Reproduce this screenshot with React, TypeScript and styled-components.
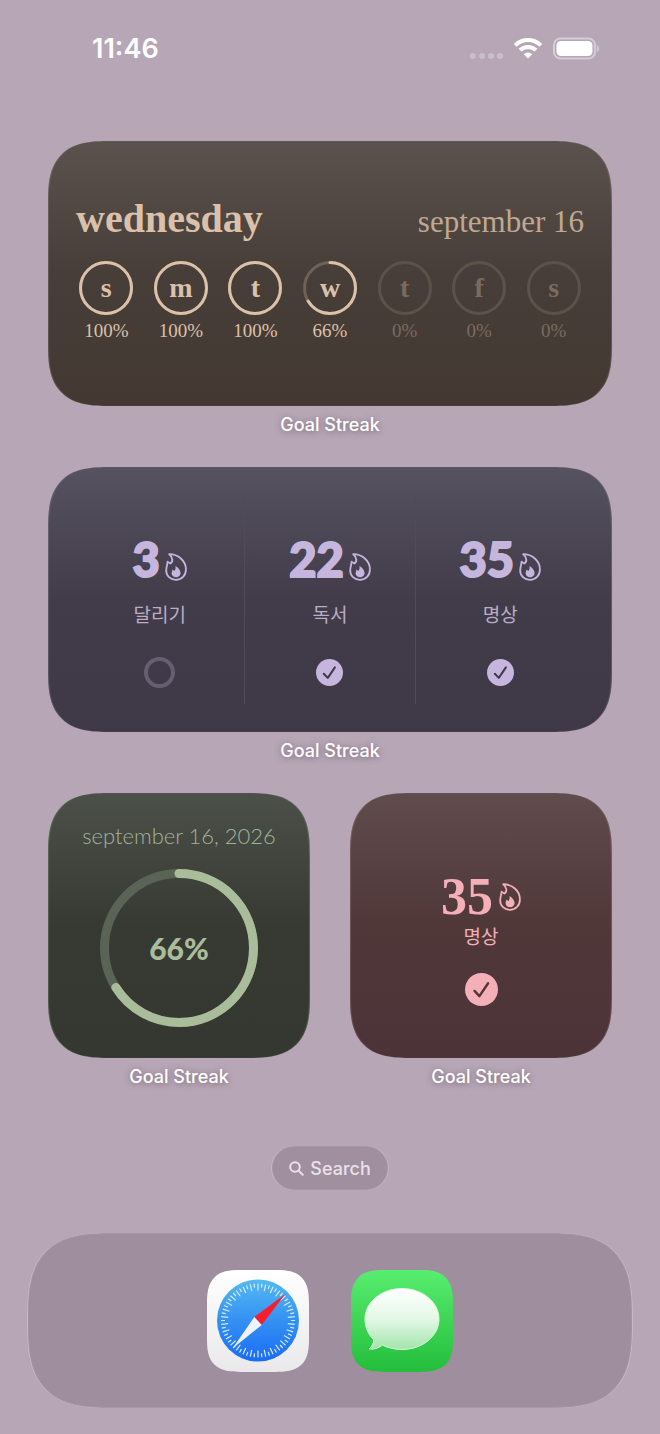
import React from "react";
import styled, { createGlobalStyle, css } from "styled-components";

const serif = '"Liberation Serif", "Times New Roman", serif';
const humanist = 'Lato, "Noto Sans CJK KR", sans-serif';
const system = 'Inter, "Liberation Sans", sans-serif';
const korean = '"Noto Sans CJK KR", sans-serif';

const GlobalStyle = createGlobalStyle`
  *, *::before, *::after { box-sizing: border-box; }
  body { margin: 0; background: #b7a7b6; font-family: ${system}; }
`;

const squircle = css<{ $round: number; $smooth: number }>`
  border-radius: ${(p) => p.$round}px;
  @supports (corner-shape: superellipse(1.5)) {
    border-radius: ${(p) => p.$smooth}px;
    corner-shape: superellipse(1.5);
  }
`;

const Screen = styled.div`
  display: flex;
  flex-direction: column;
  min-height: 100vh;
  padding-bottom: 26px;
`;

const StatusBar = styled.header`
  display: flex;
  align-items: center;
  justify-content: space-between;
  height: 98px;
  padding: 0 61px 0 92px;
  color: #fff;
`;

const Clock = styled.time`
  font-size: 27px;
  font-weight: 600;
  line-height: 32px;
`;

const StatusIcons = styled.div`
  display: flex;
  align-items: center;
  gap: 10px;
`;

const Widgets = styled.main`
  display: grid;
  grid-template-columns: 1fr 1fr;
  column-gap: 40px;
  row-gap: 24px;
  padding: 43px 48px 0;
`;

const Widget = styled.figure<{ $wide?: boolean }>`
  grid-column: ${(p) => (p.$wide ? "1 / -1" : "auto")};
  margin: 0;
`;

const Caption = styled.figcaption`
  height: 37px;
  color: #fff;
  font-size: 18px;
  font-weight: 500;
  line-height: 37px;
  text-align: center;
  text-shadow: 0 1px 6px rgba(60, 40, 60, 0.5);
`;

const Card = styled.section<{ $top: string; $mid: string; $bottom: string; $edge: string; $ink: string }>`
  display: flex;
  flex-direction: column;
  height: 265px;
  color: ${(p) => p.$ink};
  background: linear-gradient(${(p) => p.$top}, ${(p) => p.$mid} 50%, ${(p) => p.$bottom});
  box-shadow: inset 1px 0 1px ${(p) => p.$edge}, inset -1px 0 1px ${(p) => p.$edge};
  ${squircle}
`;

const WeekHeader = styled.div`
  display: flex;
  align-items: baseline;
  justify-content: space-between;
  padding: 54px 28px 0;
  font-family: ${serif};
  line-height: 48px;
`;

const Weekday = styled.h2`
  margin: 0;
  font-size: 40px;
  font-weight: 700;
`;

const MonthDay = styled.time`
  color: #c0a893;
  font-size: 31px;
`;

const Days = styled.ol`
  display: flex;
  margin: 0;
  padding: 15px 21px 0;
  list-style: none;
  font-family: ${serif};
`;

const Day = styled.li<{ $dim: boolean }>`
  display: flex;
  flex: 1;
  flex-direction: column;
  align-items: center;
  color: ${(p) => (p.$dim ? "#7a6b60" : "inherit")};
`;

const DayPercent = styled.span`
  font-size: 19px;
  line-height: 32px;
`;

const RingBox = styled.div`
  display: grid;
  place-items: center;
  > * { grid-area: 1 / 1; }
`;

const DayLetter = styled.span`
  font-size: 28px;
  font-weight: 700;
  line-height: 32px;
`;

const Goals = styled.ul`
  display: flex;
  flex: 1;
  margin: 0;
  padding: 28px 27px;
  list-style: none;
`;

const Goal = styled.li`
  display: flex;
  flex: 1;
  flex-direction: column;
  align-items: center;
  padding-top: 38px;
  & + & { border-left: 1px solid #504b5b; }
`;

const Streak = styled.div`
  display: flex;
  align-items: flex-end;
  gap: 5px;
`;

const StreakCount = styled.strong`
  font-family: ${humanist};
  font-size: 47px;
  font-weight: 900;
  line-height: 52px;
  -webkit-text-stroke: 2px currentColor;
`;

const FlameSlot = styled.span`
  display: flex;
  padding-bottom: 4px;
`;

const GoalName = styled.span`
  font-family: ${korean};
  font-size: 19px;
  font-weight: 400;
  line-height: 28px;
`;

const GoalLabel = styled(GoalName)`
  margin-top: 15px;
  color: #b9adc8;
`;

const Status = styled.div`
  display: flex;
  align-items: center;
  height: 32px;
  margin-top: 28px;
`;

const DateLine = styled.time`
  padding-top: 27px;
  color: #a3b29a;
  font-family: ${humanist};
  font-size: 22px;
  font-weight: 300;
  line-height: 32px;
  text-align: center;
`;

const GoalProgress = styled(RingBox)`
  padding-top: 17px;
`;

const ProgressValue = styled.strong`
  font-family: ${humanist};
  font-size: 30px;
  font-weight: 900;
  line-height: 36px;
`;

const SingleGoal = styled.div`
  display: flex;
  flex-direction: column;
  align-items: center;
  padding-top: 80px;
`;

const SingleStreak = styled.div`
  display: flex;
  align-items: center;
  gap: 6px;
`;

const SerifCount = styled.strong`
  font-family: ${serif};
  font-size: 52px;
  font-weight: 700;
  line-height: 48px;
`;

const SingleName = styled(GoalName)`
  margin-top: 1px;
`;

const SingleStatus = styled.div`
  display: flex;
  margin-top: 23px;
`;

const SearchButton = styled.button`
  display: flex;
  align-items: center;
  align-self: center;
  gap: 6px;
  height: 44px;
  margin-top: 51px;
  padding: 0 18px;
  border: 0;
  border-radius: 22px;
  background: #a08f9e;
  box-shadow: inset 1px 0 1px #cbbfcd, inset -1px 0 1px #cbbfcd;
  color: #eae1ea;
  font-family: ${system};
  font-size: 18px;
  font-weight: 500;
`;

const Dock = styled.nav`
  display: flex;
  align-items: center;
  justify-content: center;
  gap: 42px;
  height: 175px;
  margin: 43px 27px 0;
  background: #9f8f9e;
  box-shadow: inset 1px 0 1px #cbbfcd, inset -1px 0 1px #cbbfcd;
  ${squircle}
`;

const AppLink = styled.a`
  display: block;
  width: 102px;
  height: 102px;
  overflow: hidden;
  ${squircle}
`;

function Ring({ size, stroke, value, track, color }: { size: number; stroke: number; value: number; track: string; color: string }) {
  const r = (size - stroke) / 2;
  const c = size / 2;
  const length = 2 * Math.PI * r;
  return (
    <svg width={size} height={size} viewBox={`0 0 ${size} ${size}`} fill="none" strokeWidth={stroke} aria-hidden="true">
      <circle cx={c} cy={c} r={r} stroke={track} />
      {value > 0 && (
        <circle cx={c} cy={c} r={r} stroke={color} strokeLinecap="round" strokeDasharray={`${(length * value) / 100} ${length}`} transform={`rotate(-90 ${c} ${c})`} />
      )}
    </svg>
  );
}

function Flame() {
  return (
    <svg width="22" height="28" viewBox="0 0 22 28" fill="none" aria-hidden="true">
      <path d="M4.200 1.200C13 1.400 20.900 7.400 20.900 16.400C20.900 22.600 16.600 26.800 11 26.800C5.300 26.800 1.200 22.900 1.200 17.500C1.200 14.200 2.300 12 2.600 8.600L5.300 10.600C6.900 9.600 7.700 8 7.200 5.900C6.800 4 5.500 2.500 4.200 1.200Z" stroke="currentColor" strokeWidth="1.800" strokeLinejoin="round" />
      <path d="M10.400 13C13 14.600 15.600 17.200 15.600 20C15.600 22.700 13.600 24.200 11.100 24.200C8.400 24.200 6.600 22.500 6.600 20.200C6.600 18.900 7.100 17.600 7.700 16.500L9.300 18C10.500 16.800 10.900 15.100 10.400 13Z" fill="currentColor" />
    </svg>
  );
}

function Check({ size, mark }: { size: number; mark: string }) {
  return (
    <svg width={size} height={size} viewBox="0 0 27 27" role="img" aria-label="done">
      <circle cx="13.500" cy="13.500" r="13.500" fill="currentColor" />
      <path d="M7.800 14.700L11.800 18.900L18.900 8.400" fill="none" stroke={mark} strokeWidth="2" strokeLinecap="round" strokeLinejoin="round" />
    </svg>
  );
}

function StatusGlyphs() {
  return (
    <StatusIcons>
      <svg width="34" height="26" viewBox="0 0 34 26" fill="#cabeca" aria-hidden="true">
        {[4, 13, 22, 31].map((x) => (
          <circle key={x} cx={x} cy="20" r="3" />
        ))}
      </svg>
      <svg width="30" height="24" viewBox="0 0 30 24" fill="none" stroke="#fff" strokeWidth="4" aria-hidden="true">
        <path d="M2.200 8.300A18 18 0 0 1 27.800 8.300" />
        <path d="M7 13.200A11.400 11.400 0 0 1 23 13.200" />
        <path d="M10.700 17.200A6.200 6.200 0 0 1 19.300 17.200L15 21.500Z" fill="#fff" stroke="none" />
      </svg>
      <svg width="46" height="24" viewBox="0 0 46 24" aria-hidden="true">
        <rect x="1" y="1.500" width="41" height="20" rx="6.500" fill="none" stroke="#d6ccd6" strokeWidth="2" />
        <rect x="3.500" y="4" width="36" height="15" rx="4.500" fill="#fff" />
        <path d="M44 8C46.600 9 46.600 14 44 15Z" fill="#d6ccd6" />
      </svg>
    </StatusIcons>
  );
}

function SafariIcon() {
  return (
    <svg width="102" height="102" viewBox="0 0 102 102" aria-hidden="true">
      <defs>
        <linearGradient id="plate" x1="0" y1="0" x2="0" y2="1">
          <stop offset="0" stopColor="#fff" />
          <stop offset="1" stopColor="#e9e9eb" />
        </linearGradient>
        <linearGradient id="dial" x1="0" y1="0" x2="0" y2="1">
          <stop offset="0" stopColor="#55b9f3" />
          <stop offset="0.500" stopColor="#3491f2" />
          <stop offset="1" stopColor="#1a6bf6" />
        </linearGradient>
      </defs>
      <rect width="102" height="102" fill="url(#plate)" />
      <circle cx="51" cy="50.500" r="41" fill="url(#dial)" />
      {Array.from({ length: 60 }, (_, i) => (
        <path key={i} d={i % 2 ? "M51 13.500V17.500" : "M51 13.500V20.500"} stroke="#d5ecfd" strokeWidth="1.200" transform={`rotate(${i * 6} 51 50.5)`} />
      ))}
      <path d="M78.300 24L47.300 47L54.700 55Z" fill="#fb1d2e" />
      <path d="M25.500 78.500L47.300 47L54.700 55Z" fill="#eef4fb" />
    </svg>
  );
}

function MessagesIcon() {
  return (
    <svg width="102" height="102" viewBox="0 0 102 102" aria-hidden="true">
      <defs>
        <linearGradient id="green" x1="0" y1="0" x2="0" y2="1">
          <stop offset="0" stopColor="#58ee70" />
          <stop offset="1" stopColor="#24bd3b" />
        </linearGradient>
        <linearGradient id="bubble" x1="0" y1="0" x2="0" y2="1">
          <stop offset="0" stopColor="#fff" />
          <stop offset="0.500" stopColor="#e3f8e6" />
          <stop offset="1" stopColor="#a2e5ab" />
        </linearGradient>
      </defs>
      <rect width="102" height="102" fill="url(#green)" />
      <path d="M51 18.500C71.500 18.500 88 32 88 49C88 66 71.500 79.500 51 79.500C44 79.500 37 78 31.500 75C27 78.500 22.500 79.500 18 79C21 76.500 23 73 22.500 69.500C17 64 14 57 14 49C14 32 30.500 18.500 51 18.500Z" fill="url(#bubble)" stroke="#d6f8db" strokeWidth="1" />
    </svg>
  );
}

const week = [
  { letter: "s", percent: 100 },
  { letter: "m", percent: 100 },
  { letter: "t", percent: 100 },
  { letter: "w", percent: 66 },
  { letter: "t", percent: 0 },
  { letter: "f", percent: 0 },
  { letter: "s", percent: 0 },
];

const goals = [
  { name: "달리기", streak: 3, done: false },
  { name: "독서", streak: 22, done: true },
  { name: "명상", streak: 35, done: true },
];

export default function App() {
  return (
    <Screen>
      <GlobalStyle />
      <StatusBar>
        <Clock>11:46</Clock>
        <StatusGlyphs />
      </StatusBar>
      <Widgets>
        <Widget $wide>
          <Card $round={46} $smooth={62} $top="#5a524c" $mid="#483e39" $bottom="#433932" $edge="rgba(200,180,190,0.22)" $ink="#dcc1aa">
            <WeekHeader>
              <Weekday>wednesday</Weekday>
              <MonthDay>september 16</MonthDay>
            </WeekHeader>
            <Days>
              {week.map((day, i) => (
                <Day key={i} $dim={day.percent === 0}>
                  <RingBox>
                    <Ring size={54} stroke={3} value={day.percent} track={day.percent ? "#6f6258" : "#5d524a"} color="#dcc1aa" />
                    <DayLetter>{day.letter}</DayLetter>
                  </RingBox>
                  <DayPercent>{day.percent}%</DayPercent>
                </Day>
              ))}
            </Days>
          </Card>
          <Caption>Goal Streak</Caption>
        </Widget>
        <Widget $wide>
          <Card $round={46} $smooth={62} $top="#565260" $mid="#423c4a" $bottom="#3f3947" $edge="rgba(200,190,210,0.22)" $ink="#c6b6de">
            <Goals>
              {goals.map((goal) => (
                <Goal key={goal.name}>
                  <Streak>
                    <StreakCount>{goal.streak}</StreakCount>
                    <FlameSlot>
                      <Flame />
                    </FlameSlot>
                  </Streak>
                  <GoalLabel>{goal.name}</GoalLabel>
                  <Status>
                    {goal.done ? <Check size={27} mark="#3f3947" /> : <Ring size={31} stroke={4} value={0} track="#655f70" color="#c6b6de" />}
                  </Status>
                </Goal>
              ))}
            </Goals>
          </Card>
          <Caption>Goal Streak</Caption>
        </Widget>
        <Widget>
          <Card $round={46} $smooth={62} $top="#4b5048" $mid="#363a33" $bottom="#343831" $edge="rgba(200,210,200,0.22)" $ink="#aabd9b">
            <DateLine>september 16, 2026</DateLine>
            <GoalProgress>
              <Ring size={158} stroke={9} value={66} track="#5a6456" color="#aabd9b" />
              <ProgressValue>66%</ProgressValue>
            </GoalProgress>
          </Card>
          <Caption>Goal Streak</Caption>
        </Widget>
        <Widget>
          <Card $round={46} $smooth={62} $top="#604b4d" $mid="#503839" $bottom="#4b3338" $edge="rgba(220,190,190,0.22)" $ink="#f4afb9">
            <SingleGoal>
              <SingleStreak>
                <SerifCount>35</SerifCount>
                <Flame />
              </SingleStreak>
              <SingleName>명상</SingleName>
              <SingleStatus>
                <Check size={33} mark="#503839" />
              </SingleStatus>
            </SingleGoal>
          </Card>
          <Caption>Goal Streak</Caption>
        </Widget>
      </Widgets>
      <SearchButton type="button">
        <svg width="15" height="15" viewBox="0 0 15 15" fill="none" stroke="currentColor" strokeWidth="2" strokeLinecap="round" aria-hidden="true">
          <circle cx="6" cy="6" r="4.800" />
          <path d="M9.600 9.600L13.700 13.700" />
        </svg>
        Search
      </SearchButton>
      <Dock $round={62} $smooth={84}>
        <AppLink href="#safari" aria-label="Safari" $round={25} $smooth={34}>
          <SafariIcon />
        </AppLink>
        <AppLink href="#messages" aria-label="Messages" $round={25} $smooth={34}>
          <MessagesIcon />
        </AppLink>
      </Dock>
    </Screen>
  );
}
